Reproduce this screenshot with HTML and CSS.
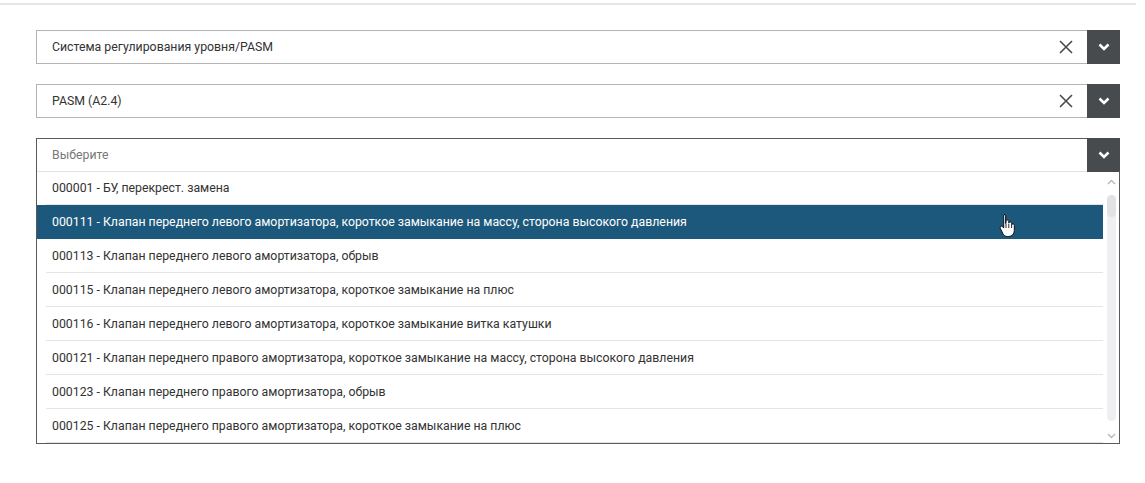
FILE: index.html
```html
<!DOCTYPE html>
<html lang="ru">
<head>
<meta charset="utf-8">
<title>PASM</title>
<link rel="stylesheet" href="styles.css">
</head>
<body>
<div class="topline"></div>
<div class="form">
  <div class="select">
    <div class="value">Система регулирования уровня/PASM
      <span class="clear"><svg width="14" height="14" viewBox="0 0 14 14"><path d="M1 1L13 13M13 1L1 13" stroke="#4a4a4a" stroke-width="1.6" fill="none"/></svg></span>
    </div>
    <span class="toggle"><svg width="12" height="8" viewBox="0 0 12 8"><path d="M1.5 1.5L6 6L10.5 1.5" stroke="#fff" stroke-width="2.6" fill="none"/></svg></span>
  </div>
  <div class="select">
    <div class="value">PASM (A2.4)
      <span class="clear"><svg width="14" height="14" viewBox="0 0 14 14"><path d="M1 1L13 13M13 1L1 13" stroke="#4a4a4a" stroke-width="1.6" fill="none"/></svg></span>
    </div>
    <span class="toggle"><svg width="12" height="8" viewBox="0 0 12 8"><path d="M1.5 1.5L6 6L10.5 1.5" stroke="#fff" stroke-width="2.6" fill="none"/></svg></span>
  </div>
  <div class="select open">
    <div class="control">
      <div class="value placeholder">Выберите</div>
      <span class="toggle"><svg width="12" height="8" viewBox="0 0 12 8"><path d="M1.5 1.5L6 6L10.5 1.5" stroke="#fff" stroke-width="2.6" fill="none"/></svg></span>
    </div>
    <div class="menu">
      <ul class="options">
        <li>000001 - БУ, перекрест. замена</li>
        <li class="active">000111 - Клапан переднего левого амортизатора, короткое замыкание на массу, сторона высокого давления
          <svg class="cursor" width="18" height="24" viewBox="0 0 18 24"><path d="M5 1.5c1 0 1.6.7 1.6 1.6v7.4l.4-.1V8.6c0-.9.6-1.5 1.4-1.5s1.4.6 1.4 1.5v1.6c.2-.8.8-1.2 1.4-1.2.8 0 1.4.6 1.4 1.5v1.3c.3-.6.8-.9 1.3-.9.8 0 1.4.6 1.4 1.5v5.2c0 3.3-2.3 5.9-5.5 5.9H8.2c-1.8 0-3.1-.9-4-2.3L1.4 15.6c-.5-.8-.3-1.8.5-2.2.7-.4 1.5-.2 1.9.4l.9 1.3V3.1c0-.9.6-1.6 1.4-1.6z" fill="#fff" stroke="#111" stroke-width="1"/><path d="M7 11v4M9.8 11v4M12.6 12v3" stroke="#111" stroke-width=".9"/></svg>
        </li>
        <li>000113 - Клапан переднего левого амортизатора, обрыв</li>
        <li>000115 - Клапан переднего левого амортизатора, короткое замыкание на плюс</li>
        <li>000116 - Клапан переднего левого амортизатора, короткое замыкание витка катушки</li>
        <li>000121 - Клапан переднего правого амортизатора, короткое замыкание на массу, сторона высокого давления</li>
        <li>000123 - Клапан переднего правого амортизатора, обрыв</li>
        <li>000125 - Клапан переднего правого амортизатора, короткое замыкание на плюс</li>
      </ul>
      <div class="scrollbar">
        <svg class="arrow" width="9" height="6" viewBox="0 0 9 6"><path d="M1 5L4.5 1.5L8 5" stroke="#b8b8b8" stroke-width="1.4" fill="none"/></svg>
        <div class="track"><div class="thumb"></div></div>
        <svg class="arrow" width="9" height="6" viewBox="0 0 9 6"><path d="M1 1L4.5 4.5L8 1" stroke="#b8b8b8" stroke-width="1.4" fill="none"/></svg>
      </div>
    </div>
  </div>
</div>
</body>
</html>
```
FILE: styles.css
```css
* { box-sizing: border-box; }
html, body { margin: 0; padding: 0; background: #fff; }
body {
  font-family: Roboto, "Liberation Sans", Arial, sans-serif;
  font-size: 12.3px;
  color: #333;
}
.topline {
  margin-top: 3px;
  width: 1136px;
  height: 2px;
  background: #e6e6e6;
}
.form {
  margin: 25px 0 0 36px;
  width: 1084px;
  display: flex;
  flex-direction: column;
  gap: 20px;
}
.select {
  display: flex;
  height: 34px;
}
.select.open {
  flex-direction: column;
  height: auto;
}
.control {
  display: flex;
  height: 34px;
}
.value {
  flex: 1;
  display: flex;
  align-items: center;
  padding-left: 15px;
  border: 1px solid #b4b4b4;
  border-right: none;
}
.clear {
  margin-left: auto;
  margin-right: 14px;
  display: flex;
}
.open .value {
  border-color: #5a5a5a;
  border-bottom-color: #e2e2e2;
}
.placeholder { color: #777; }
.toggle {
  width: 33px;
  flex: none;
  background: #484b4d;
  display: flex;
  align-items: center;
  justify-content: center;
}
.menu {
  display: flex;
  margin-top: -1px;
  border: 1px solid #5a5a5a;
  border-top: none;
}
.options {
  flex: 1;
  list-style: none;
  margin: 0;
  padding: 0;
}
.options li {
  height: 34px;
  padding: 0 0 1px 15px;
  display: flex;
  align-items: center;
  background: linear-gradient(#e4e4e4, #e4e4e4) no-repeat 9px 100% / calc(100% - 9px) 1px;
}
.options li.active {
  background: #1c587b;
  color: #fff;
  position: relative;
}
.cursor {
  position: absolute;
  left: 962px;
  top: 8px;
}
.scrollbar {
  width: 16px;
  flex: none;
  display: flex;
  flex-direction: column;
  align-items: center;
  padding: 8px 0 4px;
}
.arrow { flex: none; }
.track {
  flex: 1;
  width: 9px;
  margin: 10px 0 12px;
  background: #efeff1;
  border-radius: 5px;
}
.thumb {
  height: 22px;
  background: #e2e2e4;
  border-radius: 5px;
}
```
